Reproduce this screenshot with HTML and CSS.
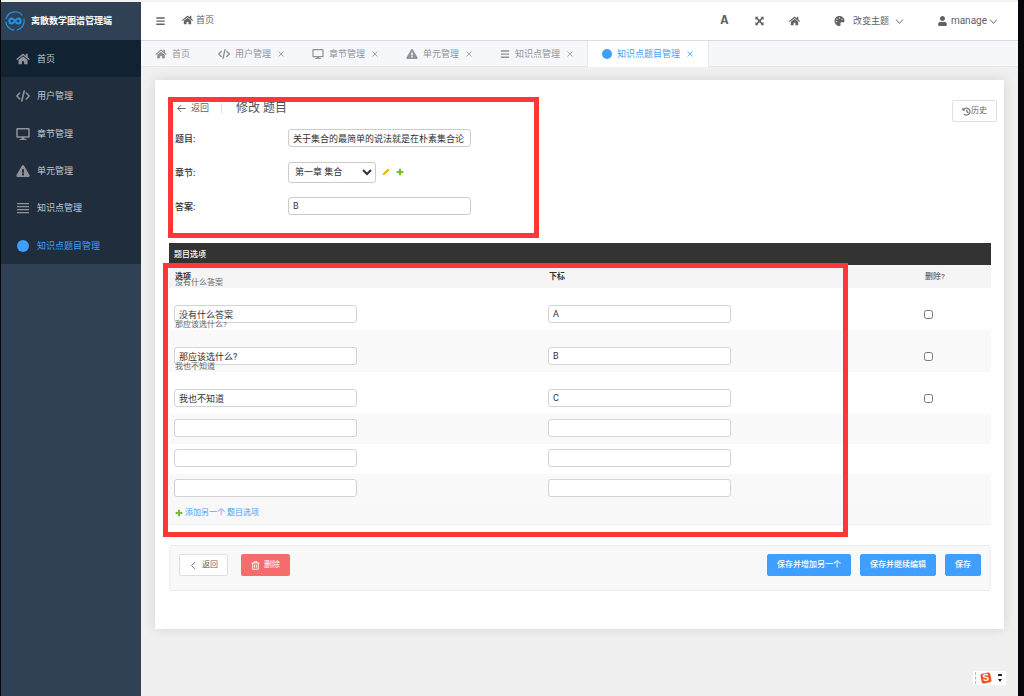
FILE: index.html
```html
<!DOCTYPE html>
<html lang="zh-CN">
<head>
<meta charset="utf-8">
<title>离散数学图谱管理端</title>
<link rel="stylesheet" href="styles.css">
</head>
<body>
<svg class="sprite" aria-hidden="true">
  <symbol id="i-home" viewBox="0 0 576 512"><path d="M280.37 148.26L96 300.11V464a16 16 0 0 0 16 16l112.06-.29a16 16 0 0 0 15.92-16V368a16 16 0 0 1 16-16h64a16 16 0 0 1 16 16v95.64a16 16 0 0 0 16 16.05L464 480a16 16 0 0 0 16-16V300L295.67 148.26a12.19 12.19 0 0 0-15.3 0zM571.6 251.47L488 182.56V44.05a12 12 0 0 0-12-12h-56a12 12 0 0 0-12 12v72.61L318.47 43a48 48 0 0 0-61 0L4.34 251.47a12 12 0 0 0-1.6 16.9l25.5 31A12 12 0 0 0 45.15 301l235.22-193.74a12.19 12.19 0 0 1 15.3 0L530.9 301a12 12 0 0 0 16.9-1.6l25.5-31a12 12 0 0 0-1.7-16.93z"/></symbol>
  <symbol id="i-code" viewBox="0 0 640 512"><path d="M170 120L40 256l130 136M470 120l130 136-130 136M375 30L265 482" fill="none" stroke="currentColor" stroke-width="74" stroke-linecap="round" stroke-linejoin="round"/></symbol>
  <symbol id="i-desktop" viewBox="0 0 576 512"><path fill-rule="evenodd" d="M48 0h480a48 48 0 0 1 48 48v320a48 48 0 0 1-48 48H345l16 48h55a24 24 0 0 1 0 48H160a24 24 0 0 1 0-48h55l16-48H48a48 48 0 0 1-48-48V48A48 48 0 0 1 48 0zm16 64v288h448V64z"/></symbol>
  <symbol id="i-warn" viewBox="0 0 576 512"><path d="M569.517 440.013C587.975 472.007 564.806 512 527.94 512H48.054c-36.937 0-59.999-40.055-41.577-71.987L246.423 23.985c18.467-32.009 64.72-31.951 83.154 0l239.94 416.028zM288 354c-25.405 0-46 20.595-46 46s20.595 46 46 46 46-20.595 46-46-20.595-46-46-46zm-43.673-165.346l7.418 136c.347 6.364 5.609 11.346 11.982 11.346h48.546c6.373 0 11.635-4.982 11.982-11.346l7.418-136c.375-6.874-5.098-12.654-11.982-12.654h-63.383c-6.884 0-12.356 5.78-11.981 12.654z"/></symbol>
  <symbol id="i-list" viewBox="0 0 12 12"><path d="M0 1h12v1.3H0zM0 4h12v1.3H0zM0 7h12v1.3H0zM0 10h12v1.3H0z"/></symbol>
  <symbol id="i-bars" viewBox="0 0 12 12"><path d="M1 1.5h10v1.7H1zM1 5.3h10V7H1zM1 9.1h10v1.7H1z"/></symbol>
  <symbol id="i-circle" viewBox="0 0 12 12"><circle cx="6" cy="6" r="6"/></symbol>
  <symbol id="i-expand" viewBox="0 0 12 12"><path d="M1 1h3.8L3.6 2.2 6 4.6l2.4-2.4L7.2 1H11v3.8L9.8 3.6 7.4 6l2.4 2.4L11 7.2V11H7.2l1.2-1.2L6 7.4 3.6 9.8 4.8 11H1V7.2l1.2 1.2L4.6 6 2.2 3.6 1 4.8z"/></symbol>
  <symbol id="i-palette" viewBox="0 0 512 512"><path d="M204.3 5C104.9 24.4 24.8 104.3 5.2 203.4c-37 187 131.7 326.4 258.8 306.7 41.2-6.4 61.4-54.6 42.5-91.7-23.1-45.4 9.9-98.4 60.9-98.4h79.7c35.8 0 64.8-29.6 64.9-65.3C511.5 97.1 368.1-26.9 204.3 5zM96 320c-17.7 0-32-14.3-32-32s14.3-32 32-32 32 14.3 32 32-14.3 32-32 32zm32-128c-17.7 0-32-14.3-32-32s14.3-32 32-32 32 14.3 32 32-14.3 32-32 32zm128-64c-17.7 0-32-14.3-32-32s14.3-32 32-32 32 14.3 32 32-14.3 32-32 32zm128 64c-17.7 0-32-14.3-32-32s14.3-32 32-32 32 14.3 32 32-14.3 32-32 32z"/></symbol>
  <symbol id="i-user" viewBox="0 0 448 512"><path d="M224 256c70.7 0 128-57.3 128-128S294.7 0 224 0 96 57.3 96 128s57.3 128 128 128zm89.6 32h-16.7c-22.2 10.2-46.9 16-72.9 16s-50.6-5.8-72.9-16h-16.7C60.2 288 0 348.2 0 422.4V464c0 26.5 21.5 48 48 48h352c26.5 0 48-21.5 48-48v-41.6c0-74.2-60.2-134.4-134.4-134.4z"/></symbol>
  <symbol id="i-down" viewBox="0 0 12 12"><path d="M1.500 3.500L6 8.500l4.500-5" fill="none" stroke="currentColor" stroke-width="1.300"/></symbol>
  <symbol id="i-left" viewBox="0 0 12 12"><path d="M8 1.500L3.500 6 8 10.500" fill="none" stroke="currentColor" stroke-width="1.300"/></symbol>
  <symbol id="i-close" viewBox="0 0 12 12"><path d="M1 1l10 10M11 1L1 11" fill="none" stroke="currentColor" stroke-width="1.600"/></symbol>
  <symbol id="i-back" viewBox="0 0 12 12"><path d="M11.500 6H1M5.500 1.500L1 6l4.500 4.500" fill="none" stroke="currentColor" stroke-width="1.300"/></symbol>
  <symbol id="i-history" viewBox="0 0 12 12"><path d="M2.300 3.200A4.700 4.700 0 1 1 2.700 9.400M6.500 3.300V6.400L8.500 7.700" fill="none" stroke="currentColor" stroke-width="1.400"/><path d="M.5.8v4h4z"/></symbol>
  <symbol id="i-trash" viewBox="0 0 12 12"><path d="M.8 2.800h10.400M4 2.500V1h4v1.500M2.200 3v8h7.600V3M4.800 5v4M7.200 5v4" fill="none" stroke="currentColor" stroke-width="1.200"/></symbol>
  <symbol id="i-plus" viewBox="0 0 12 12"><path d="M4.500 1h3v3.500H11v3H7.500V11h-3V7.500H1v-3h3.500z"/></symbol>
  <symbol id="i-pencil" viewBox="0 0 12 12"><path d="M1 11l.7-3.200L8.300 1.200q.6-.5 1.200 0l1.300 1.300q.5.6 0 1.200L4.200 10.300z"/></symbol>
</svg>

<div class="app">
  <aside class="sidebar">
    <div class="brand">
      <svg class="brand-logo" viewBox="0 0 24 24" aria-hidden="true">
        <g fill="none" stroke="#2196e8"><path d="M2.200 10A10 10 0 0 1 20 6M21.800 9.500A10 10 0 0 1 14 21.800M11 22A10 10 0 0 1 2 13" stroke-width="1.300"/><path d="M12 12C10.300 9.700 9.400 9.200 8.600 9.200a2.800 2.800 0 0 0 0 5.600c.8 0 1.700-.5 3.400-2.800s2.600-2.800 3.400-2.800a2.800 2.800 0 0 1 0 5.600c-.8 0-1.700-.5-3.400-2.800z" stroke-width="2.200"/></g>
      </svg>
      <span>离散数学图谱管理端</span>
    </div>
    <nav class="menu">
      <a class="menu-item menu-home" href="#"><svg><use href="#i-home"/></svg>首页</a>
      <a class="menu-item" href="#"><svg><use href="#i-code"/></svg>用户管理</a>
      <a class="menu-item" href="#"><svg><use href="#i-desktop"/></svg>章节管理</a>
      <a class="menu-item" href="#"><svg><use href="#i-warn"/></svg>单元管理</a>
      <a class="menu-item" href="#"><svg><use href="#i-list"/></svg>知识点管理</a>
      <a class="menu-item active" href="#"><svg><use href="#i-circle"/></svg>知识点题目管理</a>
    </nav>
  </aside>

  <div class="main">
    <header class="topbar">
      <button class="tool" aria-label="折叠菜单"><svg><use href="#i-bars"/></svg></button>
      <a class="crumb" href="#"><svg><use href="#i-home"/></svg>首页</a>
      <div class="tools">
        <button class="tool font-tool" aria-label="字体大小">A</button>
        <button class="tool" aria-label="全屏"><svg><use href="#i-expand"/></svg></button>
        <a class="tool" href="#" aria-label="首页"><svg><use href="#i-home"/></svg></a>
      </div>
      <button class="drop theme"><svg><use href="#i-palette"/></svg><span>改变主题</span><svg class="chev"><use href="#i-down"/></svg></button>
      <button class="drop account"><svg><use href="#i-user"/></svg><span>manage</span><svg class="chev"><use href="#i-down"/></svg></button>
    </header>

    <nav class="tabs">
      <a class="tab" href="#"><svg><use href="#i-home"/></svg>首页</a>
      <a class="tab" href="#"><svg><use href="#i-code"/></svg>用户管理<svg class="x"><use href="#i-close"/></svg></a>
      <a class="tab" href="#"><svg><use href="#i-desktop"/></svg>章节管理<svg class="x"><use href="#i-close"/></svg></a>
      <a class="tab" href="#"><svg><use href="#i-warn"/></svg>单元管理<svg class="x"><use href="#i-close"/></svg></a>
      <a class="tab" href="#"><svg class="small"><use href="#i-bars"/></svg>知识点管理<svg class="x"><use href="#i-close"/></svg></a>
      <a class="tab active" href="#"><svg class="small"><use href="#i-circle"/></svg>知识点题目管理<svg class="x"><use href="#i-close"/></svg></a>
    </nav>

    <main class="card">
      <button class="btn history"><svg><use href="#i-history"/></svg>历史</button>
      <section class="form">
        <div class="page-head">
          <a class="back" href="#"><svg><use href="#i-back"/></svg>返回</a>
          <h1>修改 题目</h1>
        </div>
        <div class="field">
          <label for="question">题目:</label>
          <input class="text" id="question" value="关于集合的最简单的说法就是在朴素集合论（">
        </div>
        <div class="field">
          <label for="chapter">章节:</label>
          <select id="chapter"><option>第一章 集合</option></select>
          <a class="mini edit" href="#" aria-label="编辑"><svg><use href="#i-pencil"/></svg></a>
          <a class="mini add" href="#" aria-label="增加"><svg><use href="#i-plus"/></svg></a>
        </div>
        <div class="field">
          <label for="answer">答案:</label>
          <input class="text" id="answer" value="B">
        </div>
        <span class="mark mark-form"></span>
      </section>

      <section class="options">
        <h2>题目选项</h2>
        <table>
          <thead><tr><th class="c1">选项</th><th class="c2">下标</th><th class="c3">删除?</th></tr></thead>
          <tbody>
            <tr class="saved"><td><p>没有什么答案</p><input class="text" aria-label="选项" value="没有什么答案"></td><td><input class="text" aria-label="下标" value="A"></td><td><input type="checkbox" aria-label="删除"></td></tr>
            <tr class="saved"><td><p>那应该选什么?</p><input class="text" aria-label="选项" value="那应该选什么?"></td><td><input class="text" aria-label="下标" value="B"></td><td><input type="checkbox" aria-label="删除"></td></tr>
            <tr class="saved"><td><p>我也不知道</p><input class="text" aria-label="选项" value="我也不知道"></td><td><input class="text" aria-label="下标" value="C"></td><td><input type="checkbox" aria-label="删除"></td></tr>
            <tr><td><input class="text" aria-label="选项"></td><td><input class="text" aria-label="下标"></td><td></td></tr>
            <tr><td><input class="text" aria-label="选项"></td><td><input class="text" aria-label="下标"></td><td></td></tr>
            <tr><td><input class="text" aria-label="选项"></td><td><input class="text" aria-label="下标"></td><td></td></tr>
          </tbody>
        </table>
        <div class="add-row"><a href="#"><svg><use href="#i-plus"/></svg>添加另一个 题目选项</a></div>
        <span class="mark mark-options"></span>
      </section>

      <div class="actions">
        <button class="btn"><svg><use href="#i-left"/></svg>返回</button>
        <button class="btn danger"><svg><use href="#i-trash"/></svg>删除</button>
        <button class="btn primary first">保存并增加另一个</button>
        <button class="btn primary">保存并继续编辑</button>
        <button class="btn primary">保存</button>
      </div>
    </main>
  </div>
  <div class="ime"><span class="grip"></span><span class="ime-logo">S</span><svg viewBox="0 0 4 8"><path d="M0 0h4v2H0zM0 5h4L2 8z"/></svg></div>
</div>
</body>
</html>
```
FILE: styles.css
```css
* { box-sizing: border-box; }
body {
  margin: 0;
  background: #05070b;
  color: #303133;
  font: 9px/12px Roboto, "Noto Sans CJK SC", sans-serif;
}
a { color: inherit; text-decoration: none; }
button, input, select { font: inherit; color: inherit; margin: 0; }
button { padding: 0; border: 0; background: none; }
svg { fill: currentColor; flex: none; }
.sprite { position: absolute; width: 0; height: 0; }

.app {
  position: relative;
  display: flex;
  min-height: 100vh;
  margin: 0 6px 0 1px;
  border-top: 2px solid #f2f2f2;
  background: #f0f0f0;
}

/* Sidebar */
.sidebar { flex: none; width: 140px; background: #304156; }
.brand {
  display: flex;
  align-items: center;
  gap: 5px;
  height: 38px;
  padding-left: 3px;
  color: #fff;
  font-weight: 700;
}
.brand-logo { width: 22px; height: 22px; }
.menu { display: grid; grid-template-rows: repeat(6, 1fr); height: 224px; background: #1f2d3d; }
.menu-item {
  display: flex;
  align-items: center;
  gap: 7px;
  padding: 1px 0 0 15px;
  color: #bfcbd9;
}
.menu-item svg { width: 14px; height: 12px; color: #909399; }
.menu-home { background: #112233; }
.menu-item.active, .menu-item.active svg { color: #409eff; }

/* Top bar */
.main { flex: 1; min-width: 0; }
.topbar {
  display: flex;
  align-items: center;
  height: 39px;
  padding: 0 20px 0 14px;
  border-bottom: 1px solid #d8dce5;
  background: #fff;
  color: #606266;
}
.topbar svg { width: 11px; height: 10px; }
.crumb { display: flex; align-items: center; gap: 3px; margin-left: 16px; padding-bottom: 3px; }
.tools { display: flex; gap: 24px; margin-left: auto; }
.tool { display: flex; align-items: center; justify-content: center; width: 11px; }
.font-tool { font: 700 13px/12px "Liberation Mono", monospace; }
.drop { display: flex; align-items: center; }
.topbar .chev { width: 9px; height: 9px; }
.theme { gap: 8px; margin-left: 34px; }
.theme .chev { margin-left: -2px; }
.account { gap: 3px; margin-left: 33px; font-size: 10px; }
.account .chev { margin-left: -1px; }

/* Tabs */
.tabs { display: flex; height: 26px; border-bottom: 1px solid #e4e7ed; background: #f5f7fa; }
.tab { display: flex; align-items: center; gap: 5px; padding: 0 14px; color: #909399; }
.tab svg { width: 12px; height: 10px; }
.tab .small { width: 10px; }
.tab .x { width: 6px; height: 6px; margin-left: 2px; }
.tab.active { margin-bottom: -1px; padding-right: 15px; border: 1px solid #e4e7ed; border-width: 0 1px; background: #fff; color: #409eff; }

/* Page card */
.card {
  position: relative;
  margin: 13px 14px 66px;
  padding: 17px 13px 38px 14px;
  background: #fff;
  box-shadow: 0 0 12px rgba(0, 0, 0, 0.12);
}
.btn {
  display: flex;
  align-items: center;
  justify-content: center;
  gap: 4px;
  height: 22px;
  padding: 0 9px;
  border: 1px solid #dcdfe6;
  border-radius: 2px;
  background: #fff;
  color: #606266;
  font-size: 8px;
}
.btn svg { width: 9px; height: 9px; }
.history { position: absolute; top: 20px; right: 7px; gap: 0; }
.form { position: relative; height: 146px; padding: 3px 6px 0; }
.page-head { display: flex; align-items: center; height: 16px; margin-bottom: 5px; }
.back {
  display: flex;
  align-items: center;
  gap: 5px;
  height: 10px;
  padding: 0 12px 0 2px;
  border-right: 1px solid #dcdfe6;
  color: #606266;
}
.back svg { width: 9px; height: 9px; }
h1 { margin: 0 0 0 14px; color: #505256; font-size: 12px; line-height: 16px; font-weight: 400; }
.field { display: flex; align-items: center; height: 34px; }
.field label { width: 113px; padding-top: 2px; font-weight: 500; }
.text {
  width: 183px;
  height: 18px;
  padding: 0 0 0 4px;
  border: 1px solid #ccc;
  border-radius: 3px;
  background: #fff;
}
select {
  width: 88px;
  height: 21px;
  padding: 0 2px;
  border: 1px solid #ccc;
  border-radius: 3px;
  background: #fff;
}
.mini { display: flex; margin-left: 6px; }
.mini svg, .add-row svg { width: 8px; height: 8px; }
.edit { color: #efb80b; }
.add { color: #70bf2b; }

/* Outlined regions */
.mark { position: absolute; border: 5px solid #ff3737; pointer-events: none; }
.mark-form { top: 0; left: -1px; width: 371px; height: 141px; }
.mark-options { top: 20px; left: -6px; width: 685px; bottom: -12px; }

/* Options table */
.options { position: relative; }
h2 { margin: 0; padding: 6px 5px 4px; background: #333; color: #fff; font-size: 8px; line-height: 12px; font-weight: 500; }
table { width: 100%; border-collapse: collapse; table-layout: fixed; }
th { height: 23px; padding: 0 7px 0 6px; background: #f5f5f5; color: #303133; font-size: 8px; font-weight: 700; text-align: left; }
.c1 { width: 374px; }
.c3 { width: 72px; color: #666; font-weight: 500; }
td { position: relative; height: 30px; padding: 5px 5px 7px; vertical-align: top; }
td .text { display: block; border-color: #d4d4d4; }
.saved td { height: 42px; padding-top: 17px; }
tbody tr:nth-child(even) { background: #f9f9f9; }
td p { position: absolute; top: -11px; left: 6px; margin: 0; color: #666; font-size: 8px; line-height: 11px; }
td input[type="checkbox"] { display: block; width: 9px; height: 9px; margin-top: 5px; }
.add-row { padding: 3px 6px 5px; border-bottom: 1px solid #eee; background: #f8f8f8; color: #409eff; font-size: 8px; }
.add-row a { display: flex; align-items: center; gap: 2px; }
.add-row svg { color: #70bf2b; }

/* Bottom actions */
.actions {
  display: flex;
  gap: 9px;
  margin-top: 20px;
  padding: 8px 9px 14px;
  border: 1px solid #eee;
  border-radius: 2px;
  background: #f8f8f8;
}
.danger { margin-left: 4px; border-color: #f56c6c; background: #f56c6c; color: #fff; }
.primary { border-color: #409eff; background: #409eff; color: #fff; font-weight: 500; }
.first { margin-left: auto; }

/* Input method bar */
.ime {
  position: absolute;
  right: 12px;
  bottom: 11px;
  display: flex;
  align-items: center;
  gap: 5px;
  width: 33px;
  height: 14px;
  padding-left: 2px;
  background: #fff;
}
.grip { height: 12px; border-left: 1px dashed #bbb; }
.ime-logo { width: 10px; height: 10px; border-radius: 2px; background: #f4511e; color: #fff; font-size: 10px; line-height: 10px; font-weight: 700; text-align: center; transform: rotate(-12deg); }
.ime svg { width: 4px; height: 8px; margin-left: 2px; color: #222; }
```
